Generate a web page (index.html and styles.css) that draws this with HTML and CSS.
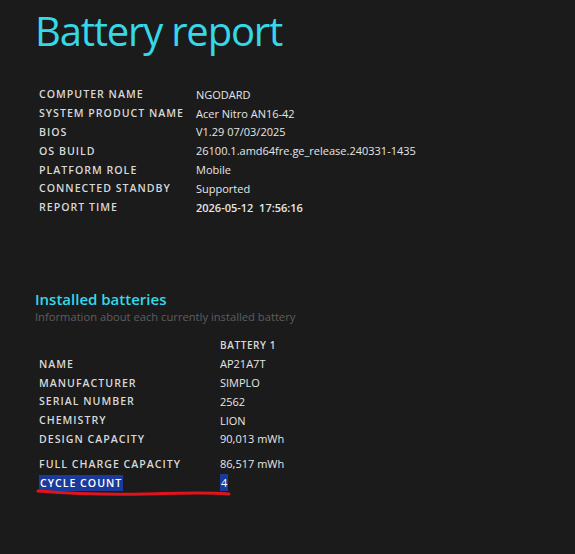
FILE: index.html
```html
<!DOCTYPE html>
<html lang="en">
<head>
  <meta charset="UTF-8">
  <title>Battery report</title>
  <link rel="stylesheet" href="styles.css">
</head>
<body>
  <!-- Page title -->
  <h1>Battery report</h1>

  <!-- System info -->
  <table class="info">
    <tr><td class="label">COMPUTER NAME</td><td>NGODARD</td></tr>
    <tr><td class="label">SYSTEM PRODUCT NAME</td><td>Acer Nitro AN16-42</td></tr>
    <tr><td class="label">BIOS</td><td>V1.29 07/03/2025</td></tr>
    <tr><td class="label">OS BUILD</td><td>26100.1.amd64fre.ge_release.240331-1435</td></tr>
    <tr><td class="label">PLATFORM ROLE</td><td>Mobile</td></tr>
    <tr><td class="label">CONNECTED STANDBY</td><td>Supported</td></tr>
    <tr><td class="label">REPORT TIME</td><td class="time">2026-05-12&nbsp;&nbsp;17:56:16</td></tr>
  </table>

  <!-- Installed batteries -->
  <h2>Installed batteries</h2>
  <div class="explanation">Information about each currently installed battery</div>

  <div class="battery-wrap">
    <table class="batteries">
      <thead>
        <tr><td></td><td class="col-head">BATTERY 1</td></tr>
      </thead>
      <tr><td class="label">NAME</td><td>AP21A7T</td></tr>
      <tr><td class="label">MANUFACTURER</td><td>SIMPLO</td></tr>
      <tr><td class="label">SERIAL NUMBER</td><td>2562</td></tr>
      <tr><td class="label">CHEMISTRY</td><td>LION</td></tr>
      <tr><td class="label">DESIGN CAPACITY</td><td>90,013 mWh</td></tr>
      <tr class="spacer"><td></td><td></td></tr>
      <tr><td class="label">FULL CHARGE CAPACITY</td><td>86,517 mWh</td></tr>
      <tr><td class="label"><span class="sel">CYCLE COUNT</span></td><td><span class="sel">4</span></td></tr>
    </table>
    <!-- hand drawn red underline -->
    <svg class="scribble" width="200" height="14" viewBox="0 0 200 14">
      <path d="M2 5 C 40 8, 70 9, 110 8 S 170 6, 193 8" stroke="#e0141c" stroke-width="3" fill="none" stroke-linecap="round"/>
    </svg>
  </div>
</body>
</html>
```

FILE: styles.css
```css
/* ====== BASE ====== */
* {
  margin: 0;
  padding: 0;
  box-sizing: border-box;
}
body {
  background-color: #1b1b1b;
  color: #e6e6e6;
  font-family: "Open Sans", "Noto Sans", sans-serif;
  padding: 5px 0 0 35px;
  height: 554px;
  overflow: hidden;
}

/* ====== TITLE ====== */
h1 {
  font-size: 40px;
  font-weight: 400;
  color: #35d8e8;
  letter-spacing: -1.2px;
  line-height: 52px;
  margin-bottom: 28px;
}

/* ====== TABLES ====== */
table {
  border-collapse: collapse;
  margin-left: 4px;
}
td {
  font-size: 11px;
  height: 18.8px;
  padding: 0;
  white-space: nowrap;
  vertical-align: middle;
}
td.label {
  font-size: 10.6px;
  font-weight: 600;
  color: #d8d8d8;
  letter-spacing: 1px;
}
.info td.label {
  width: 157px;
}
.info td.time {
  font-weight: 600;
}

/* ====== INSTALLED BATTERIES ====== */
h2 {
  margin-top: 72px;
  font-size: 15px;
  font-weight: 600;
  color: #35d8e8;
  line-height: 20px;
}
.explanation {
  font-size: 11.2px;
  color: #5e5e5e;
  line-height: 16px;
  margin-bottom: 11px;
}
.battery-wrap {
  position: relative;
  width: 260px;
}
.batteries td.label {
  width: 181px;
}
.batteries td.col-head {
  font-size: 10px;
  font-weight: 600;
  color: #d8d8d8;
  letter-spacing: 0.6px;
  height: 18px;
}
.batteries tr.spacer td {
  height: 6px;
}
.sel {
  background-color: #1a3a9c;
  color: #fff;
  padding: 1px 1px;
}
.scribble {
  position: absolute;
  left: 1px;
  top: 150px;
}
```
